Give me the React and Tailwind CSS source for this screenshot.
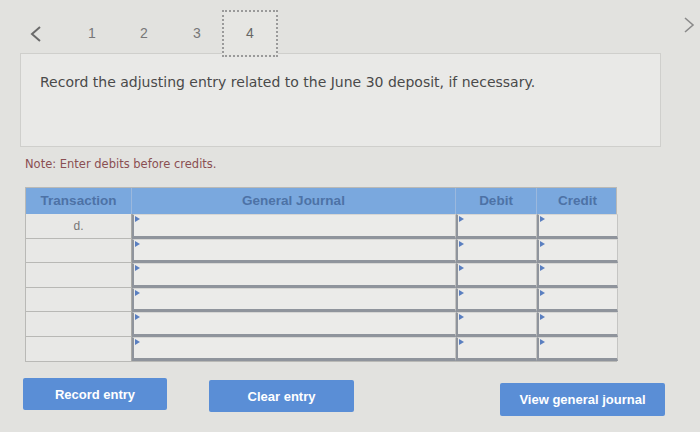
import React from 'react';

const rows = ['d.', '', '', '', '', ''];

const Flag = () => (
  <span className="absolute left-[1px] top-[1px] w-0 h-0 border-t-[3px] border-b-[3px] border-l-[5px] border-t-transparent border-b-transparent border-l-[#5a7fc0]" />
);

const InputCell = ({ last }) => (
  <div className={`relative bg-[#ebebe9] border-l-2 border-[#8f949c] border-b-[3px] ${last ? 'border-b-2' : ''} border-r border-t border-t-[#d6d6d4] border-r-[#c5c5c3]`}>
    <Flag />
  </div>
);

const App = () => {
  return (
    <div className="w-[700px] h-[432px] bg-[#e2e2df] overflow-hidden text-[#555]" style={{ fontFamily: '"Liberation Sans", Arial, sans-serif' }}>
      {/* step nav */}
      <div className="relative h-[53px] flex items-start">
        <div className="flex items-center mt-[10px] ml-[28px]">
          <svg width="16" height="18" viewBox="0 0 16 18" className="mr-[40px]">
            <path d="M12 2 L4 9 L12 16" fill="none" stroke="#6a6a6a" strokeWidth="2" />
          </svg>
          <span className="w-[16px] text-center text-[14px] text-[#777] mr-[36px]">1</span>
          <span className="w-[16px] text-center text-[14px] text-[#777] mr-[37px]">2</span>
          <span className="w-[16px] text-center text-[14px] text-[#777] mr-[17px]">3</span>
          <div className="w-[56px] h-[47px] border-2 border-dotted border-[#9a9a9a] bg-[#e6e6e3] flex items-center justify-center text-[14px] text-[#666]">4</div>
        </div>
        <svg width="14" height="20" viewBox="0 0 14 20" className="absolute left-[682px] top-[15px]">
          <path d="M3 3 L11 10 L3 17" fill="none" stroke="#8a8a8a" strokeWidth="1.6" />
        </svg>
      </div>

      {/* question */}
      <div className="ml-[20px] w-[641px] h-[94px] bg-[#e9e9e7] border border-[#cfcfcc] pl-[19px] pt-[18px]">
        <p className="text-[14px] text-[#4a4a4a]" style={{ fontFamily: '"DejaVu Sans", Verdana, sans-serif' }}>
          Record the adjusting entry related to the June 30 deposit, if necessary.
        </p>
      </div>

      <p className="ml-[25px] mt-[9px] text-[11.5px] text-[#8a4f52]" style={{ fontFamily: '"DejaVu Sans", Verdana, sans-serif' }}>
        Note: Enter debits before credits.
      </p>

      {/* journal table */}
      <div className="ml-[25px] mt-[14px] w-[592px] border border-[#b9b9b6]">
        <div className="grid grid-cols-[106px_324px_81px_81px] h-[26px] bg-[#7aa8de] text-[13.5px] font-bold text-[#4d72a6]">
          <div className="flex items-center justify-center border-r border-[#9bb8dd]">Transaction</div>
          <div className="flex items-center justify-center border-r border-[#9bb8dd]">General Journal</div>
          <div className="flex items-center justify-center border-r border-[#9bb8dd]">Debit</div>
          <div className="flex items-center justify-center">Credit</div>
        </div>
        {rows.map((t, i) => (
          <div key={i} className="grid grid-cols-[106px_324px_81px_81px] h-[24.5px]">
            <div className={`flex items-center justify-center text-[12px] text-[#777] bg-[#e8e8e6] border-r border-[#a9a9a6] ${i < rows.length - 1 ? 'border-b border-b-[#b8b8b5]' : ''}`}>{t}</div>
            <InputCell last={i === rows.length - 1} />
            <InputCell last={i === rows.length - 1} />
            <InputCell last={i === rows.length - 1} />
          </div>
        ))}
      </div>

      {/* buttons */}
      <div className="relative h-[70px]">
        <button className="absolute left-[23px] top-[16px] w-[144px] h-[32px] bg-[#5a8ed6] rounded-[2px] text-white text-[13px] font-bold">Record entry</button>
        <button className="absolute left-[209px] top-[18px] w-[145px] h-[32px] bg-[#5a8ed6] rounded-[2px] text-white text-[13px] font-bold">Clear entry</button>
        <button className="absolute left-[500px] top-[21px] w-[165px] h-[33px] bg-[#5a8ed6] rounded-[2px] text-white text-[13px] font-bold">View general journal</button>
      </div>
    </div>
  );
};

export default App;
